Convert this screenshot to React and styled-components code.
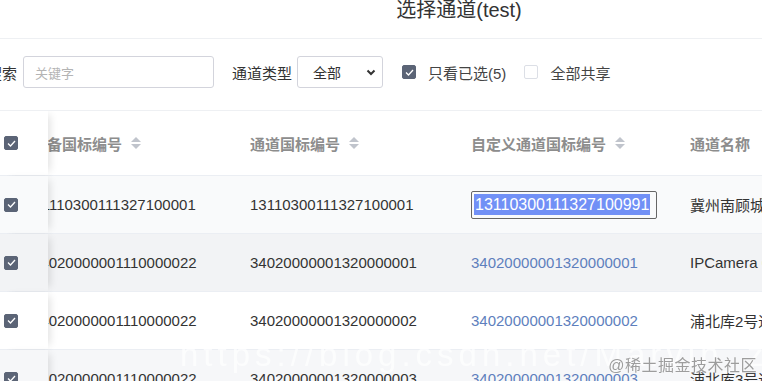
import React, { useLayoutEffect, useRef } from 'react';
import styled, { createGlobalStyle } from 'styled-components';

const GlobalStyle = createGlobalStyle`
  html, body {
    margin: 0;
    padding: 0;
    background: #fff;
    overflow: hidden;
  }
  body {
    font-family: "Liberation Sans", "Noto Sans CJK SC", sans-serif;
    color: #333;
  }
`;

const Page = styled.div`
  position: relative;
  width: 762px;
  height: 381px;
  overflow: hidden;
`;

const Dialog = styled.div`
  width: 944px;
  margin-left: -13px;
`;

const Header = styled.div`
  height: 39px;
  box-sizing: border-box;
  border-bottom: 1px solid #eef0f3;
  display: flex;
  justify-content: center;
  align-items: flex-start;
`;

const Title = styled.h2`
  margin: 0;
  font-size: 20px;
  line-height: 20px;
  font-weight: 400;
  color: #333;
`;

const FilterBar = styled.div`
  display: flex;
  align-items: center;
  padding: 17px 0 22px;
`;

const Label = styled.span`
  font-size: 15px;
  color: #333;
  margin-right: ${({ gap }) => gap || 6}px;
  white-space: nowrap;
`;

const SearchInput = styled.div`
  width: 191px;
  height: 32px;
  box-sizing: border-box;
  border: 1px solid #d3d4dc;
  border-radius: 3px;
  display: flex;
  align-items: center;
  padding-left: 11px;
  font-size: 13px;
  color: #b4b4b4;
  margin-right: 18px;
`;

const Select = styled.div`
  width: 86px;
  height: 32px;
  box-sizing: border-box;
  border: 1px solid #d3d4dc;
  border-radius: 3px;
  display: flex;
  align-items: center;
  justify-content: space-between;
  padding: 0 6px 0 15px;
  font-size: 14px;
  color: #333;
  margin-right: 19px;
`;

const CheckLabel = styled.label`
  display: flex;
  align-items: center;
  gap: 12px;
  font-size: 15px;
  color: #444;
  margin-right: 18px;
`;

const Box = styled.span`
  width: 14px;
  height: 14px;
  box-sizing: border-box;
  border-radius: 2px;
  display: inline-flex;
  align-items: center;
  justify-content: center;
  flex: none;
  background: ${({ checked }) => (checked ? '#5b6476' : '#fff')};
  border: 1px solid ${({ checked }) => (checked ? '#5b6476' : '#dcdfe6')};
`;

const TableScroll = styled.div`
  margin-left: 13px;
  border-top: 1px solid #eef0f3;
  overflow: hidden;
`;

const Row = styled.div`
  display: grid;
  grid-template-columns: 48px 218px 221px 219px 220px 220px;
  width: max-content;
  height: ${({ head }) => (head ? 64 : 57)}px;
  border-bottom: 1px solid #ebeef3;
  background: ${({ bg }) => bg || '#fff'};
`;

const FixedCell = styled.div`
  position: sticky;
  left: 0;
  z-index: 2;
  display: flex;
  align-items: center;
  padding-left: 4px;
  background: inherit;
  box-shadow: 6px 0 8px -4px rgba(0, 0, 0, 0.12);
`;

const Cell = styled.div`
  display: flex;
  align-items: center;
  padding-left: ${({ pad }) => (pad != null ? pad : 16)}px;
  gap: 9px;
  white-space: nowrap;
  overflow: hidden;
  font-size: 15px;
  font-weight: ${({ head }) => (head ? 700 : 400)};
  color: ${({ head, link }) => (head ? '#8d8d8d' : link ? '#5e7fbd' : '#333')};
`;

const EditBox = styled.div`
  width: 186px;
  height: 28px;
  box-sizing: border-box;
  border: 1px solid #666;
  border-radius: 2px;
  display: flex;
  align-items: center;
  padding-left: 2px;
`;

const Selected = styled.span`
  background: #7190f6;
  color: #fff;
  font-size: 16px;
  line-height: 21px;
  padding: 0 1px;
`;

const Watermark = styled.div`
  position: absolute;
  left: 180px;
  top: 338px;
  font-size: 33px;
  line-height: 1;
  letter-spacing: 5px;
  color: rgba(255, 255, 255, 0.7);
  pointer-events: none;
  white-space: nowrap;
  z-index: 5;
`;

const Credit = styled.div`
  position: absolute;
  right: 5px;
  bottom: 5px;
  font-size: 16px;
  line-height: 20px;
  letter-spacing: 0.5px;
  color: rgba(140, 140, 140, 0.85);
  text-shadow: 0 0 2px #fff;
  z-index: 6;
`;

const Check = ({ checked = true }) => (
  <Box checked={checked}>
    {checked && (
      <svg width="9" height="7" viewBox="0 0 9 7">
        <polyline points="1,3.5 3.5,6 8,1" fill="none" stroke="#fff" strokeWidth="1.3" />
      </svg>
    )}
  </Box>
);

const SortIcon = () => (
  <svg width="10" height="14" viewBox="0 0 10 14">
    <polygon points="5,1 10,6 0,6" fill="#c0c4cc" />
    <polygon points="0,8 10,8 5,13" fill="#c0c4cc" />
  </svg>
);

const Chevron = () => (
  <svg width="10" height="7" viewBox="0 0 10 7">
    <polyline points="1.5,1.5 5,5 8.5,1.5" fill="none" stroke="#333" strokeWidth="2" />
  </svg>
);

const rows = [
  {
    bg: '#f9fafb',
    dev: '131110300111327100001',
    ch: '13110300111327100001',
    custom: null,
    name: '冀州南顾城通道01',
  },
  {
    bg: '#f2f3f5',
    dev: '34020000001110000022',
    ch: '34020000001320000001',
    custom: '34020000001320000001',
    name: 'IPCamera 01',
  },
  {
    bg: '#fff',
    dev: '34020000001110000022',
    ch: '34020000001320000002',
    custom: '34020000001320000002',
    name: '浦北库2号通道',
  },
  {
    bg: '#f6f7f9',
    dev: '34020000001110000022',
    ch: '34020000001320000003',
    custom: '34020000001320000003',
    name: '浦北库3号通道',
  },
];

export default function App() {
  const scrollRef = useRef(null);

  useLayoutEffect(() => {
    if (scrollRef.current) scrollRef.current.scrollLeft = 32;
  }, []);

  return (
    <Page>
      <GlobalStyle />
      <Dialog>
        <Header>
          <Title>选择通道(test)</Title>
        </Header>

        <FilterBar>
          <Label>搜索</Label>
          <SearchInput>关键字</SearchInput>
          <Label gap={5}>通道类型</Label>
          <Select>
            全部
            <Chevron />
          </Select>
          <CheckLabel>
            <Check />
            只看已选(5)
          </CheckLabel>
          <CheckLabel>
            <Check checked={false} />
            全部共享
          </CheckLabel>
        </FilterBar>

        <TableScroll ref={scrollRef}>
          <Row head>
            <FixedCell>
              <Check />
            </FixedCell>
            <Cell head>
              设备国标编号 <SortIcon />
            </Cell>
            <Cell head>
              通道国标编号 <SortIcon />
            </Cell>
            <Cell head>
              自定义通道国标编号 <SortIcon />
            </Cell>
            <Cell head>通道名称</Cell>
            <Cell head>通道类型</Cell>
          </Row>
          {rows.map((r, i) => (
            <Row key={i} bg={r.bg}>
              <FixedCell>
                <Check />
              </FixedCell>
              <Cell pad={r.custom ? 16 : 9}>{r.dev}</Cell>
              <Cell>{r.ch}</Cell>
              <Cell link>
                {r.custom ? (
                  r.custom
                ) : (
                  <EditBox>
                    <Selected>13110300111327100991</Selected>
                  </EditBox>
                )}
              </Cell>
              <Cell>{r.name}</Cell>
              <Cell>摄像机</Cell>
            </Row>
          ))}
        </TableScroll>
      </Dialog>

      <Watermark>https://blog.csdn.net/Marvin_zh</Watermark>
      <Credit>@稀土掘金技术社区</Credit>
    </Page>
  );
}
